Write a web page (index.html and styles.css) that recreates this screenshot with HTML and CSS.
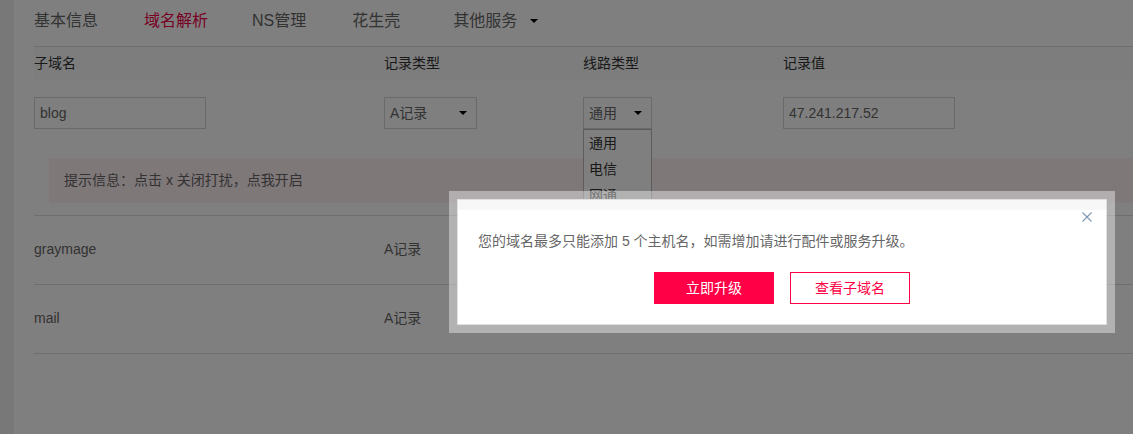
FILE: index.html
```html
<!DOCTYPE html>
<html lang="zh-CN">
<head>
<meta charset="utf-8">
<title>域名解析</title>
<link rel="stylesheet" href="styles.css">
</head>
<body>
<div class="page">
  <aside class="side"></aside>
  <main class="main">
    <nav class="tabs">
      <a class="tab t1">基本信息</a>
      <a class="tab t2 active">域名解析</a>
      <a class="tab t3">NS管理</a>
      <a class="tab t4">花生壳</a>
      <a class="tab more">其他服务<span class="caret"></span></a>
    </nav>
    <div class="thead">
      <div>子域名</div>
      <div>记录类型</div>
      <div>线路类型</div>
      <div>记录值</div>
    </div>
    <div class="edit-row">
      <div><div class="input wide">blog</div></div>
      <div><div class="select type">A记录<span class="caret"></span></div></div>
      <div class="line-cell">
        <div class="select line">通用<span class="caret"></span></div>
        <ul class="options">
          <li>通用</li>
          <li>电信</li>
          <li>网通</li>
          <li>移动</li>
          <li>教育网</li>
        </ul>
      </div>
      <div><div class="input wide">47.241.217.52</div></div>
    </div>
    <div class="tip">提示信息：点击 x 关闭打扰，点我开启</div>
    <div class="row"><div>graymage</div><div>A记录</div><div></div><div></div></div>
    <div class="row last"><div>mail</div><div>A记录</div><div></div><div></div></div>
  </main>
</div>
<div class="mask"></div>
<div class="modal">
  <div class="modal-inner">
    <div class="modal-bar"></div>
    <button class="close" aria-label="关闭">
      <svg width="10" height="10" viewBox="0 0 10 10"><path d="M0.5 0.5L9.5 9.5M9.5 0.5L0.5 9.5" stroke="#7d97b3" stroke-width="1.1" fill="none"/></svg>
    </button>
    <p class="msg">您的域名最多只能添加 5 个主机名，如需增加请进行配件或服务升级。</p>
    <div class="actions">
      <a class="btn primary">立即升级</a>
      <a class="btn ghost">查看子域名</a>
    </div>
  </div>
</div>
</body>
</html>
```
FILE: styles.css
```css
* { box-sizing: border-box; }
html, body { margin: 0; padding: 0; }
body {
  font-family: "Liberation Sans", "Noto Sans CJK SC", sans-serif;
  font-size: 14px;
  color: #666;
  background: #fff;
  width: 1133px;
  height: 434px;
  overflow: hidden;
}
.page { display: flex; height: 434px; }
.side { width: 14px; flex: none; background: #f0f0f0; }
.main { flex: 1; padding-left: 20px; min-width: 0; }

.tabs {
  display: flex;
  align-items: flex-start;
  height: 47px;
  border-bottom: 1px solid #dcdcdc;
}
.tab {
  font-size: 16px;
  line-height: 42px;
  color: #666;
  display: flex;
  align-items: center;
}
.tab.t1 { margin-right: 46px; }
.tab.t2 { margin-right: 44px; }
.tab.t3 { margin-right: 46px; }
.tab.t4 { margin-right: 53px; }
.tab.active { color: #f0004a; }
.tab .caret { margin-left: 13px; }
.caret {
  display: inline-block;
  width: 0; height: 0;
  border-left: 4px solid transparent;
  border-right: 4px solid transparent;
  border-top: 4px solid #000;
}

.thead, .edit-row, .row {
  display: grid;
  grid-template-columns: 350px 199px 200px 1fr;
}
.thead {
  height: 32px;
  line-height: 32px;
  background: #fafafa;
  color: #333;
}
.edit-row { padding-top: 18px; }
.input, .select {
  height: 32px;
  border: 1px solid #d5d5d5;
  line-height: 30px;
  padding-left: 5px;
  color: #666;
  background: #fff;
}
.input.wide { width: 172px; }
.select { display: flex; align-items: center; justify-content: space-between; padding-right: 9px; }
.select.type { width: 93px; }
.select.line { width: 69px; }
.line-cell { position: relative; }
.options {
  position: absolute;
  top: 32px;
  left: 0;
  width: 69px;
  margin: 0;
  padding: 0;
  list-style: none;
  background: #fff;
  border: 1px solid #b8b8b8;
}
.options li {
  height: 26px;
  line-height: 26px;
  padding-left: 5px;
  color: #333;
}

.tip {
  margin: 29px 0 12px 15px;
  height: 45px;
  line-height: 45px;
  padding-left: 15px;
  background: #fff0f3;
  color: #666;
}
.row {
  height: 69px;
  line-height: 66px;
  border-top: 1px solid #dcdcdc;
  color: #666;
}
.row.last { height: 70px; border-bottom: 1px solid #dcdcdc; }

.mask {
  position: fixed;
  inset: 0;
  background: rgba(0, 0, 0, 0.5);
}
.modal {
  position: fixed;
  left: 449px;
  top: 191px;
  width: 666px;
  padding: 8px;
  background: rgba(255, 255, 255, 0.4);
}
.modal-inner {
  position: relative;
  background: #fff;
  border: 1px solid #e0e0e0;
  padding-bottom: 20px;
}
.modal-bar { height: 10px; background: #f7f7f7; }
.close {
  position: absolute;
  top: 12px;
  right: 14px;
  width: 10px;
  height: 10px;
  padding: 0;
  border: 0;
  background: none;
  display: block;
}
.close svg { display: block; }
.msg {
  margin: 21px 0 0 20px;
  line-height: 20px;
  font-size: 14px;
  color: #666;
}
.actions {
  display: flex;
  justify-content: center;
  gap: 16px;
  margin-top: 21px;
}
.btn {
  width: 120px;
  height: 32px;
  line-height: 30px;
  text-align: center;
  font-size: 14px;
  border: 1px solid #ff0046;
}
.btn.primary { background: #ff0046; color: #fff; }
.btn.ghost { background: #fff; color: #ff0046; }
```
